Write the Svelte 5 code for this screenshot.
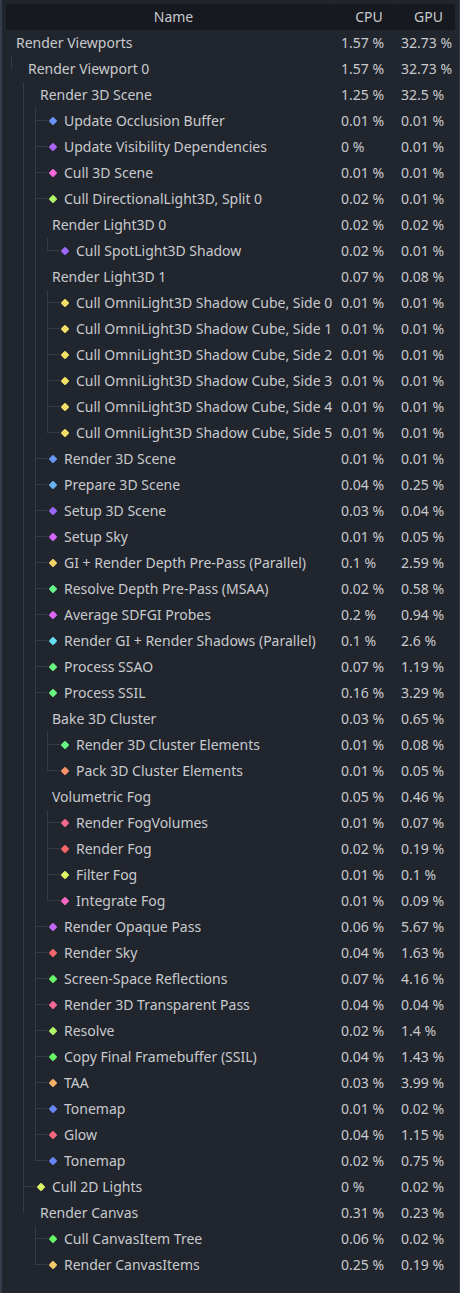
<script>
  // depth | name | cpu | gpu | marker colour (leaves only)
  const source = [
    [0, 'Render Viewports', '1.57', '32.73'],
    [1, 'Render Viewport 0', '1.57', '32.73'],
    [2, 'Render 3D Scene', '1.25', '32.5'],
    [3, 'Update Occlusion Buffer', '0.01', '0.01', '#6795f5'],
    [3, 'Update Visibility Dependencies', '0', '0.01', '#aa67f5'],
    [3, 'Cull 3D Scene', '0.01', '0.01', '#f567dc'],
    [3, 'Cull DirectionalLight3D, Split 0', '0.02', '0.01', '#b0f567'],
    [3, 'Render Light3D 0', '0.02', '0.02'],
    [4, 'Cull SpotLight3D Shadow', '0.02', '0.01', '#9b67f5'],
    [3, 'Render Light3D 1', '0.07', '0.08'],
    [4, 'Cull OmniLight3D Shadow Cube, Side 0', '0.01', '0.01', '#f5e067'],
    [4, 'Cull OmniLight3D Shadow Cube, Side 1', '0.01', '0.01', '#f5e067'],
    [4, 'Cull OmniLight3D Shadow Cube, Side 2', '0.01', '0.01', '#f5e067'],
    [4, 'Cull OmniLight3D Shadow Cube, Side 3', '0.01', '0.01', '#f5e067'],
    [4, 'Cull OmniLight3D Shadow Cube, Side 4', '0.01', '0.01', '#f5e067'],
    [4, 'Cull OmniLight3D Shadow Cube, Side 5', '0.01', '0.01', '#f5e067'],
    [3, 'Render 3D Scene', '0.01', '0.01', '#6795f5'],
    [3, 'Prepare 3D Scene', '0.04', '0.25', '#67b4f5'],
    [3, 'Setup 3D Scene', '0.03', '0.04', '#9767f5'],
    [3, 'Setup Sky', '0.01', '0.05', '#d467f5'],
    [3, 'GI + Render Depth Pre-Pass (Parallel)', '0.1', '2.59', '#f5d367'],
    [3, 'Resolve Depth Pre-Pass (MSAA)', '0.02', '0.58', '#67f58c'],
    [3, 'Average SDFGI Probes', '0.2', '0.94', '#dc67f5'],
    [3, 'Render GI + Render Shadows (Parallel)', '0.1', '2.6', '#67dcf5'],
    [3, 'Process SSAO', '0.07', '1.19', '#67f57c'],
    [3, 'Process SSIL', '0.16', '3.29', '#67f57c'],
    [3, 'Bake 3D Cluster', '0.03', '0.65'],
    [4, 'Render 3D Cluster Elements', '0.01', '0.08', '#67f583'],
    [4, 'Pack 3D Cluster Elements', '0.01', '0.05', '#f59067'],
    [3, 'Volumetric Fog', '0.05', '0.46'],
    [4, 'Render FogVolumes', '0.01', '0.07', '#f5678d'],
    [4, 'Render Fog', '0.02', '0.19', '#f56767'],
    [4, 'Filter Fog', '0.01', '0.1', '#e1f567'],
    [4, 'Integrate Fog', '0.01', '0.09', '#f567c4'],
    [3, 'Render Opaque Pass', '0.06', '5.67', '#c367f5'],
    [3, 'Render Sky', '0.04', '1.63', '#f56769'],
    [3, 'Screen-Space Reflections', '0.07', '4.16', '#67f569'],
    [3, 'Render 3D Transparent Pass', '0.04', '0.04', '#f56796'],
    [3, 'Resolve', '0.02', '1.4', '#b0f567'],
    [3, 'Copy Final Framebuffer (SSIL)', '0.04', '1.43', '#67f569'],
    [3, 'TAA', '0.03', '3.99', '#f5b067'],
    [3, 'Tonemap', '0.01', '0.02', '#6786f5'],
    [3, 'Glow', '0.04', '1.15', '#f5677d'],
    [3, 'Tonemap', '0.02', '0.75', '#6786f5'],
    [2, 'Cull 2D Lights', '0', '0.02', '#dbf567'],
    [2, 'Render Canvas', '0.31', '0.23'],
    [3, 'Cull CanvasItem Tree', '0.06', '0.02', '#67f569'],
    [3, 'Render CanvasItems', '0.25', '0.19', '#f5c967']
  ];

  // A guide goes on below a row while its level has another sibling to come.
  function continues(index, level) {
    for (let j = index + 1; j < source.length; j++) {
      if (source[j][0] < level) return false;
      if (source[j][0] === level) return true;
    }
    return false;
  }

  const rows = source.map(([depth, name, cpu, gpu, color], index) => ({
    name, cpu, gpu, color,
    guides: Array.from({ length: depth }, (_, k) => ({
      full: continues(index, k + 1),
      half: k + 1 === depth,
      branch: k + 1 === depth && !!color
    }))
  }));
</script>

<div class="panel">
  <div class="header">
    <div class="h-name">Name</div>
    <div class="h-cpu">CPU</div>
    <div class="h-gpu">GPU</div>
  </div>
  <div class="tree">
    {#each rows as row}
      <div class="row">
        <div class="name">
          {#each row.guides as guide}
            <svg class="guide" width="12" height="26" viewBox="0 0 12 26" shape-rendering="crispEdges">
              {#if guide.full}
                <rect width="1" height="26" />
              {:else if guide.half}
                <rect width="1" height="13" />
              {/if}
              {#if guide.branch}
                <rect x="1" y="12" width="12" height="1" />
              {/if}
            </svg>
          {/each}
          {#if row.color}
            <svg class="marker" width="8" height="8" viewBox="0 0 8 8" style:fill={row.color}>
              <path d="M3.3 .3Q4 -.3 4.7 .3L7.7 3.3Q8.3 4 7.7 4.7L4.7 7.7Q4 8.3 3.3 7.7L.3 4.7Q-.3 4 .3 3.3Z" />
            </svg>
          {/if}
          <span class="label">{row.name}</span>
        </div>
        <div class="value">{row.cpu} %</div>
        <div class="value">{row.gpu} %</div>
      </div>
    {/each}
  </div>
</div>

<style>
  :global(body) {
    margin: 0;
    background: #363d4a;
  }
  .panel {
    box-sizing: border-box;
    width: 460px;
    height: 1293px;
    padding: 4px 4px 0;
    border: solid #363d4a;
    border-width: 0 1px 0 2px;
    background: #21252e;
    color: #c8cacd;
    font: 14px/26px "Noto Sans", sans-serif;
    white-space: nowrap;
    overflow: hidden;
  }
  .header {
    display: grid;
    grid-template-columns: 329px 60px 60px;
  }
  .header div {
    height: 26px;
    border-radius: 2px;
    background: #16191f;
    text-align: center;
  }
  .header .h-name {
    padding-left: 6px;
  }
  .header .h-cpu {
    padding-left: 8px;
  }
  .header .h-gpu {
    padding-left: 7px;
  }
  .row {
    display: grid;
    grid-template-columns: 330px 60px 58px;
    height: 26px;
    padding-left: 5px;
  }
  .name {
    display: flex;
    align-items: center;
  }
  .guide {
    flex: none;
    overflow: visible;
    fill: #373b43;
  }
  .marker {
    flex: none;
    margin: 0 2px;
    overflow: visible;
  }
  .label {
    padding-left: 5px;
  }
</style>
